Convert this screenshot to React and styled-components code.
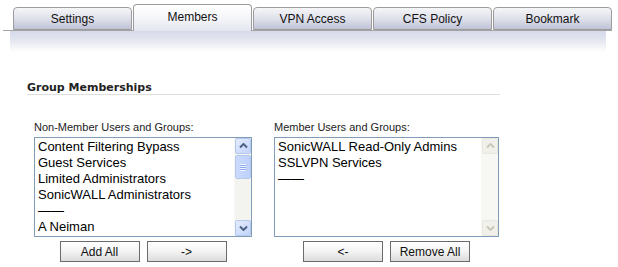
import styled, { createGlobalStyle } from "styled-components";

const tabs = ["Settings", "Members", "VPN Access", "CFS Policy", "Bookmark"];

const nonMembers = [
  "Content Filtering Bypass",
  "Guest Services",
  "Limited Administrators",
  "SonicWALL Administrators",
  "——",
  "A Neiman",
];

const members = ["SonicWALL Read-Only Admins", "SSLVPN Services", "——"];

export default function App() {
  return (
    <>
      <GlobalStyle />
      <TabBar>
        {tabs.map((t) => (
          <Tab key={t} $active={t === "Members"}>
            {t}
          </Tab>
        ))}
      </TabBar>
      <Shade />

      <Section>
        <SectionTitle>Group Memberships</SectionTitle>
        <Columns>
          <Column>
            <Label>Non-Member Users and Groups:</Label>
            <ListBox $width={218}>
              <Items>
                {nonMembers.map((m, i) => (
                  <Item key={i}>{m}</Item>
                ))}
              </Items>
              <ScrollBar />
            </ListBox>
            <Buttons>
              <Button>Add All</Button>
              <Button>-&gt;</Button>
            </Buttons>
          </Column>
          <Column>
            <Label>Member Users and Groups:</Label>
            <ListBox $width={225}>
              <Items>
                {members.map((m, i) => (
                  <Item key={i}>{m}</Item>
                ))}
              </Items>
              <ScrollBar disabled />
            </ListBox>
            <Buttons>
              <Button>&lt;-</Button>
              <Button>Remove All</Button>
            </Buttons>
          </Column>
        </Columns>
      </Section>
    </>
  );
}

function ScrollBar({ disabled }) {
  return (
    <Track $disabled={disabled}>
      <Arrow $disabled={disabled}>
        <Chevron $disabled={disabled} />
      </Arrow>
      {!disabled && (
        <Thumb>
          <Grip />
        </Thumb>
      )}
      <Spacer />
      <Arrow $disabled={disabled}>
        <Chevron $disabled={disabled} $down />
      </Arrow>
    </Track>
  );
}

function Chevron({ $down, $disabled }) {
  const c = $disabled ? "#c9c7ba" : "#4d6185";
  return (
    <svg width="9" height="6" viewBox="0 0 9 6">
      <path
        d={$down ? "M1 1.5 L4.5 5 L8 1.5" : "M1 4.5 L4.5 1 L8 4.5"}
        fill="none"
        stroke={c}
        strokeWidth="2"
      />
    </svg>
  );
}

const GlobalStyle = createGlobalStyle`
  body {
    margin: 0;
    background: #fff;
    font-family: "Liberation Sans", Arial, sans-serif;
  }
`;

const TabBar = styled.div`
  display: flex;
  align-items: flex-end;
  gap: 1px;
  width: 609px;
  height: 31px;
  margin-left: 3px;
  padding-left: 10px;
  box-sizing: border-box;
  border-bottom: 1px solid #a4a4a4;
`;

const Tab = styled.div`
  width: 119px;
  height: ${({ $active }) => ($active ? "27px" : "23px")};
  margin-bottom: ${({ $active }) => ($active ? "-1px" : "0")};
  box-sizing: border-box;
  border: 1px solid #9c9c9c;
  border-bottom: ${({ $active }) => ($active ? "none" : "1px solid #9c9c9c")};
  border-radius: 4px 4px 0 0;
  background: ${({ $active }) =>
    $active
      ? "linear-gradient(#ffffff, #f2f3f8 60%, #e3e5ef)"
      : "linear-gradient(#f6f6f8, #dcdee9 55%, #bfc2d6)"};
  display: flex;
  align-items: center;
  justify-content: center;
  padding-bottom: ${({ $active }) => ($active ? "3px" : "0")};
  font-size: 12px;
  color: #111;
`;

const Shade = styled.div`
  width: 596px;
  height: 21px;
  margin-left: 10px;
  background: linear-gradient(#d5d8e8, #e6e8f1 50%, #ffffff);
`;

const Section = styled.div`
  padding: 29px 0 0 27px;
`;

const SectionTitle = styled.div`
  width: 473px;
  font-family: "DejaVu Sans", Verdana, sans-serif;
  font-size: 11px;
  font-weight: bold;
  line-height: 13px;
  color: #222;
  border-bottom: 1px solid #dedede;
`;

const Columns = styled.div`
  display: flex;
  gap: 22px;
  padding: 26px 0 0 7px;
`;

const Column = styled.div`
  display: flex;
  flex-direction: column;
`;

const Label = styled.div`
  font-size: 11px;
  line-height: 13px;
  color: #222;
  margin-bottom: 3px;
`;

const ListBox = styled.div`
  display: flex;
  width: ${({ $width }) => $width}px;
  height: 100px;
  box-sizing: border-box;
  border: 1px solid #7f9db9;
  background: #fff;
`;

const Items = styled.div`
  flex: 1;
  padding: 1px 0 0 3px;
  overflow: hidden;
`;

const Item = styled.div`
  font-size: 13px;
  line-height: 16px;
  color: #000;
  white-space: nowrap;
`;

const Track = styled.div`
  width: 16px;
  display: flex;
  flex-direction: column;
  background: ${({ $disabled }) => ($disabled ? "#f7f7f3" : "#f3f3ef")};
  border-left: 1px solid #f7f7f3;
`;

const Arrow = styled.div`
  height: 16px;
  box-sizing: border-box;
  border: 1px solid ${({ $disabled }) => ($disabled ? "#e8e8df" : "#b5c8ee")};
  border-radius: 2px;
  background: ${({ $disabled }) =>
    $disabled ? "#f1f0ea" : "linear-gradient(135deg, #e4ecfd, #c2d3fb)"};
  display: flex;
  align-items: center;
  justify-content: center;
`;

const Thumb = styled.div`
  height: 24px;
  margin-top: 1px;
  box-sizing: border-box;
  border: 1px solid #b5c8ee;
  border-radius: 2px;
  background: linear-gradient(90deg, #cbdafc, #bcd0fb);
  display: flex;
  align-items: center;
  justify-content: center;
`;

const Grip = styled.div`
  width: 6px;
  height: 7px;
  background: repeating-linear-gradient(
    #eef3fe 0 1px,
    #8faaf0 1px 2px
  );
`;

const Spacer = styled.div`
  flex: 1;
`;

const Buttons = styled.div`
  display: flex;
  justify-content: center;
  gap: 7px;
  margin-top: 4px;
`;

const Button = styled.button`
  width: 80px;
  height: 21px;
  padding: 0;
  border: 1px solid #6b6b6b;
  border-radius: 0;
  background: linear-gradient(#ffffff, #f3f3f3 50%, #dcdcdc);
  font-family: "Liberation Sans", Arial, sans-serif;
  font-size: 12px;
  color: #111;
`;
